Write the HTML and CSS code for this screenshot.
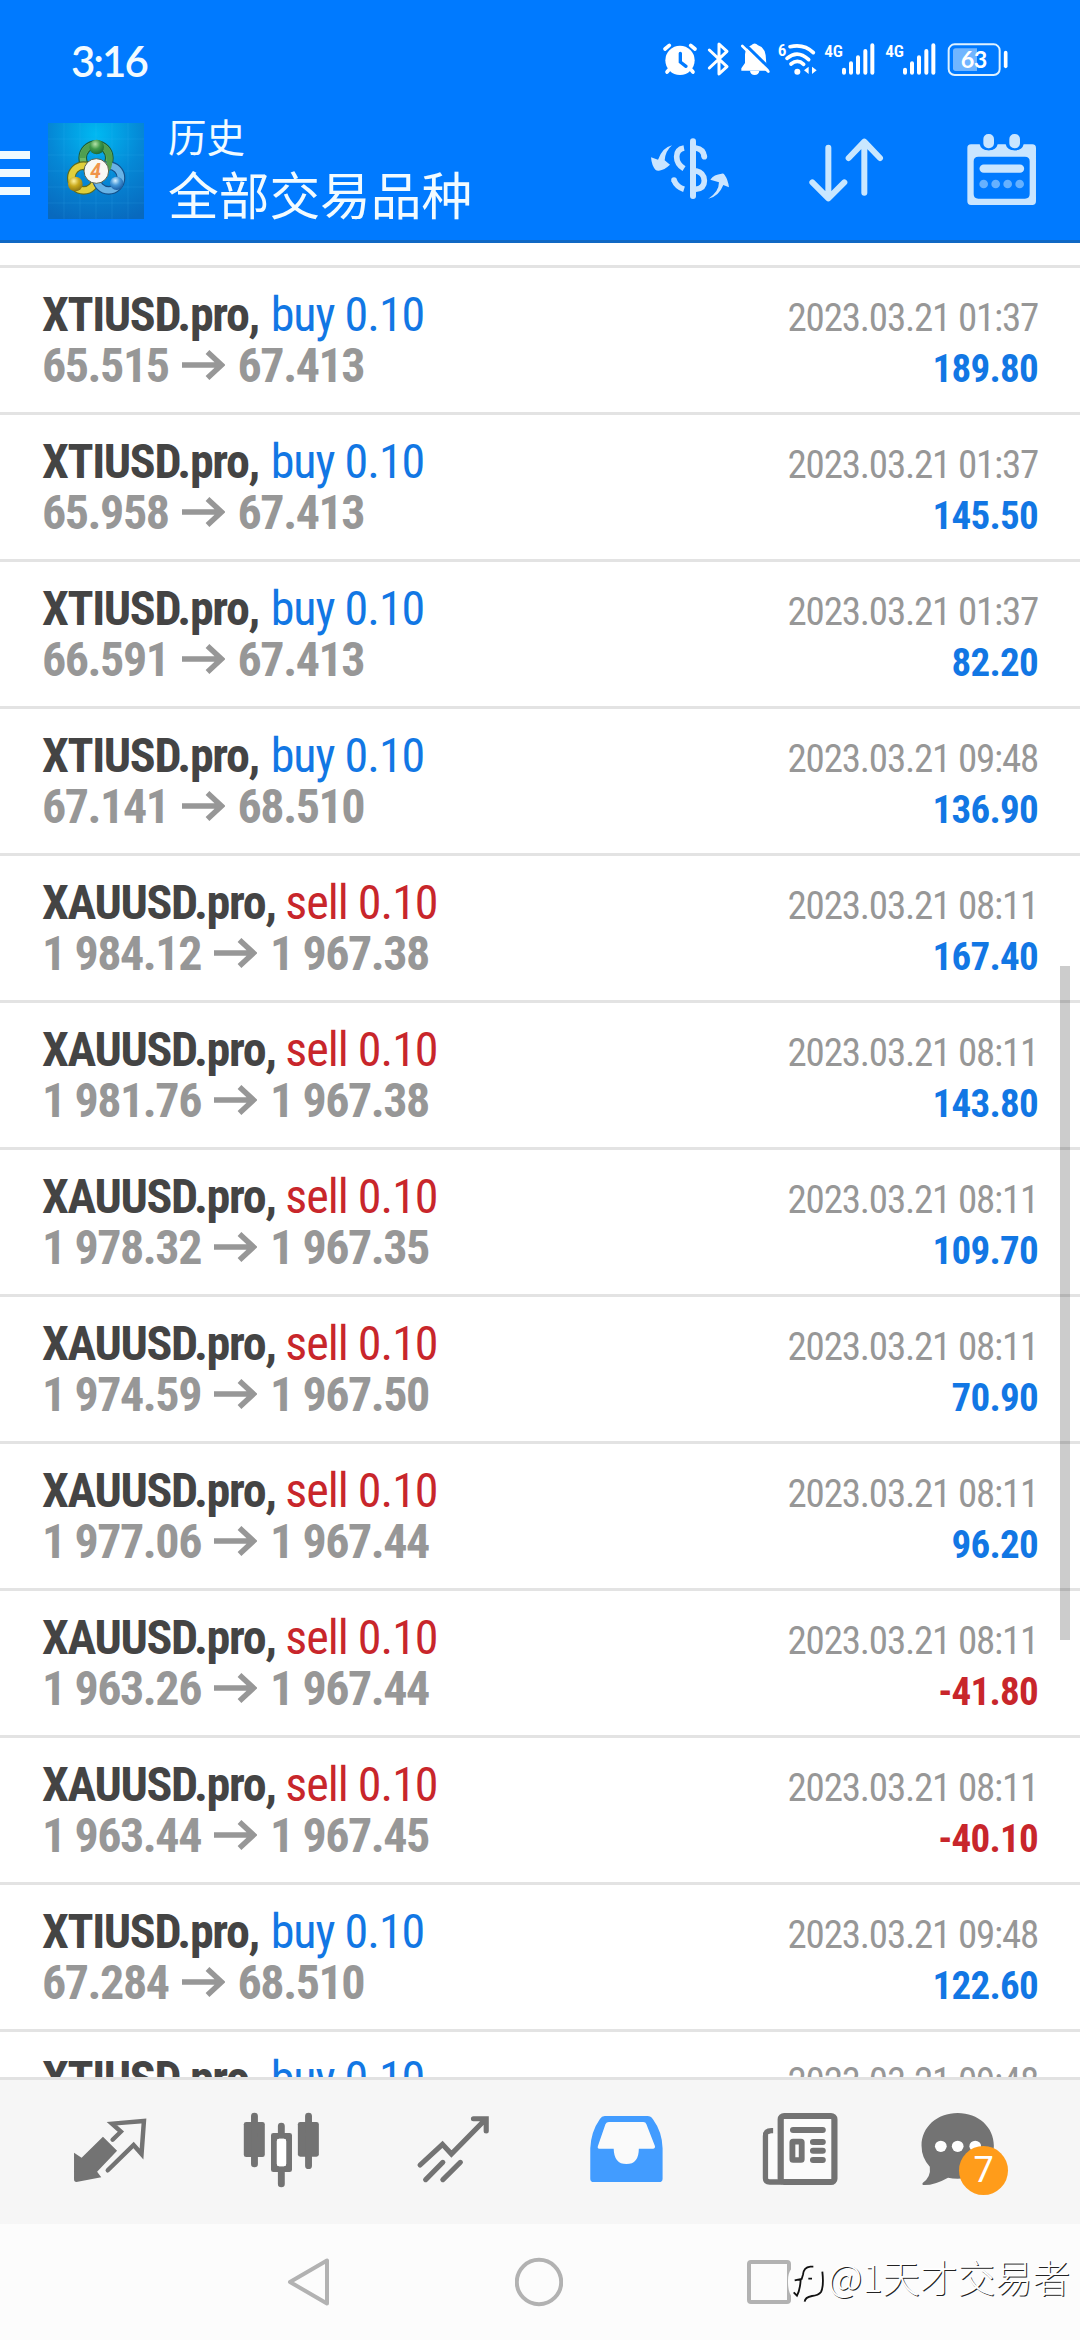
FILE: index.html
```
<!DOCTYPE html>
<html lang="zh-CN">
<head>
<meta charset="utf-8">
<title>历史</title>
<link rel="stylesheet" href="styles.css">
</head>
<body>
<div class="screen">
  <header class="header">
    <div class="status">
      <span class="clock">3:16</span>
      <div class="status-icons">
        <svg width="40" height="40" viewBox="180 120 120 120"><circle cx="240" cy="181" r="44" fill="#fff"/><path d="M195 147l13-11M285 147l-13-11M206 210l-5 6M274 210l5 6" stroke="#fff" stroke-width="11" stroke-linecap="round"/><path d="M241 160v26l17 13" fill="none" stroke="#007aff" stroke-width="10" stroke-linecap="round"/></svg>
        <svg width="35" height="40" viewBox="300 120 105 120"><path d="M328 150l53 50-24 22v-90l24 22-53 50" fill="none" stroke="#fff" stroke-width="9" stroke-linejoin="round" stroke-linecap="round"/></svg>
        <svg width="40" height="40" viewBox="405 120 120 120"><path d="M424 212v-7l11-16v-26q2-22 19-27 10-11 20 0 20 6 23 30l2 26 9 20h-84zM450 213h28q-2 12-14 12t-14-12z" fill="#fff"/><path d="M433 131l78 76" stroke="#007aff" stroke-width="9"/><path d="M427 138l78 77" stroke="#fff" stroke-width="8" stroke-linecap="round"/></svg>
        <svg width="45" height="40" viewBox="525 120 135 120"><text x="533" y="169" class="signal-label">6</text><g fill="none" stroke="#fff" stroke-width="11" stroke-linecap="round"><path d="M570 140q42-10 70 18M561 175q32-27 65 4M573 192q20-16 38 1"/></g><circle cx="592" cy="215" r="9" fill="#fff"/><path d="M626 200v22l-14-11zM636 200v22l14-11z" fill="#fff"/></svg>
        <svg width="60" height="40" viewBox="660 120 180 120"><text x="673" y="171" class="signal-label">4G</text><path d="M732 209v9M753 190v28M774 172v46M796 153v65M817 136v82" stroke="#fff" stroke-width="12" stroke-linecap="round"/></svg>
        <svg width="61.7" height="40" viewBox="840 120 185 120"><text x="856" y="171" class="signal-label">4G</text><path d="M915 209v9M936 190v28M957 172v46M979 153v65M1000 136v82" stroke="#fff" stroke-width="12" stroke-linecap="round"/></svg>
        <svg width="70" height="40" viewBox="1025 120 210 120"><rect x="1045" y="133" width="153" height="92" rx="18" fill="none" stroke="#dff2ff" stroke-width="6"/><path d="M1066 145h64v68h-64q-8 0-8-8v-52q0-8 8-8z" fill="#70b5ff"/><path d="M1216 158v41" stroke="#fff" stroke-width="11" stroke-linecap="round"/><text x="1120" y="205" text-anchor="middle" class="battery-label">63</text></svg>
      </div>
    </div>
    <div class="toolbar">
      <div class="menu"><i></i><i></i><i></i></div>
      <svg class="logo" width="96" height="96" viewBox="24 38 288 288">
        <defs>
          <radialGradient id="bg" cx=".5" cy=".12" r=".95"><stop offset="0" stop-color="#00b9f2"/><stop offset=".5" stop-color="#0588d6"/><stop offset="1" stop-color="#0869be"/></radialGradient>
          <radialGradient id="g" cx=".4" cy=".3" r=".7"><stop offset="0" stop-color="#b5e2a8"/><stop offset=".5" stop-color="#3f9a4a"/><stop offset="1" stop-color="#1c6a37"/></radialGradient>
          <radialGradient id="y" cx=".4" cy=".3" r=".7"><stop offset="0" stop-color="#fff3a0"/><stop offset=".5" stop-color="#c9a91c"/><stop offset="1" stop-color="#8b7615"/></radialGradient>
          <radialGradient id="b" cx=".4" cy=".3" r=".7"><stop offset="0" stop-color="#d5efff"/><stop offset=".5" stop-color="#4597d8"/><stop offset="1" stop-color="#1c5ea5"/></radialGradient>
        </defs>
        <rect x="24" y="38" width="288" height="288" fill="url(#bg)"/>
        <path d="M72 38v288M120 38v288M168 38v288M216 38v288M264 38v288M24 86h288M24 134h288M24 182h288M24 230h288M24 278h288" stroke="#4fc2ff" stroke-opacity=".28" stroke-width="1.5"/>
        <g fill="none">
          <circle cx="168" cy="143" r="40" stroke="#1d5e38" stroke-width="26"/><circle cx="168" cy="143" r="40" stroke="#6bb868" stroke-width="19"/>
          <circle cx="131" cy="203" r="37" stroke="#5e6b1d" stroke-width="26"/><circle cx="131" cy="203" r="37" stroke="#e0cf3c" stroke-width="19"/>
          <circle cx="206" cy="203" r="37" stroke="#14508a" stroke-width="26"/><circle cx="206" cy="203" r="37" stroke="#68b3e6" stroke-width="19"/>
          <path d="M128 143a40 40 0 0 1 80 0q3 18-6 34" stroke="#4f9f50" stroke-width="17"/>
        </g>
        <circle cx="170" cy="110" r="22" fill="url(#g)"/><circle cx="106" cy="221" r="22" fill="url(#y)"/><circle cx="230" cy="219" r="20" fill="url(#b)"/>
        <circle cx="169" cy="182" r="37" fill="#f8f8f4" stroke="#58634d" stroke-width="3"/>
        <text x="167" y="203" text-anchor="middle" class="logo-digit">4</text>
      </svg>
      <div class="titles"><div class="subtitle">历史</div><div class="title">全部交易品种</div></div>
      <div class="actions">
        <svg width="80" height="73.3" viewBox="150 400 240 220"><g fill="none" stroke="#cbe5ff" stroke-width="17"><path d="M279 425v164" stroke-width="18" stroke-linecap="round"/><path d="M252 445q-22 4-22 26 0 22 22 36"/><path d="M287 445q24 3 26 27M287 513q26 6 26 30 0 23-26 26" stroke-linecap="butt"/><path d="M222 542q8 20 30 27"/></g><circle cx="313" cy="471" r="8.5" fill="#cbe5ff"/><circle cx="222" cy="541" r="8.5" fill="#cbe5ff"/><path d="M216 437q-28 6-42 43l-21-7q2 26 14 38 4 3 10 2 16-2 33-18l-16-13q2-28 22-45zM325 597q32-20 32-49l-26-8q11-16 34-18 6-1 9 4 10 14 13 37l-17-7q-14 35-45 41z" fill="#cbe5ff"/></svg>
        <svg width="80" height="73.3" viewBox="620 400 240 220"><path d="M684 444v150M636 548l48 48 48-48M792 579V427M745 475l47-49 47 49" fill="none" stroke="#c9e7ff" stroke-width="18" stroke-linecap="round" stroke-linejoin="round"/></svg>
        <svg width="80" height="73.3" viewBox="1090 400 240 220"><path fill-rule="evenodd" d="M1114 434h26q4 18 27 18t27-18h24q4 18 27 18t27-18h26q11 0 11 11v160q0 11-11 11h-184q-11 0-11-11V445q0-11 11-11zM1136 471q-14 0-14 14v98q0 14 14 14h140q14 0 14-14v-98q0-14-14-14z" fill="#c9e5ff"/><g fill="#c9e5ff" stroke="#007aff" stroke-width="6"><rect x="1148" y="400" width="38" height="49" rx="18"/><rect x="1226" y="400" width="38" height="49" rx="18"/></g><path d="M1152 507h109" stroke="#c9e5ff" stroke-width="25" stroke-linecap="round"/><g fill="#66b1ff"><circle cx="1152" cy="553" r="13"/><circle cx="1188" cy="553" r="13"/><circle cx="1224" cy="553" r="13"/><circle cx="1260" cy="553" r="13"/></g></svg>
      </div>
    </div>
  </header>
  <main class="list" id="list"></main>
  <nav class="tabs">
    <div class="tab"><svg viewBox="69.7 150 499.5 432" preserveAspectRatio="none"><path d="M299 320l41 42-58 63 12 17-72 14q-7 0-7-8v-80l22 15z" fill="#737373"/><path d="M327 329l24-24-26-24 93-8-7 99-23-27-75 76" fill="none" stroke="#737373" stroke-width="13" stroke-linecap="round" stroke-linejoin="miter"/></svg></div>
    <div class="tab"><svg viewBox="569.2 150 499.5 432" preserveAspectRatio="none"><g fill="#737373"><rect x="708" y="276" width="61" height="105" rx="7"/><rect x="865" y="276" width="61" height="104" rx="7"/><path fill-rule="evenodd" d="M794 309h47q7 0 7 7v103q0 7-7 7h-47q-7 0-7-7V316q0-7 7-7zM811 326q-7 0-7 7v69q0 7 7 7h13q7 0 7-7v-69q0-7-7-7z"/><rect x="804" y="326" width="27" height="83" rx="7" fill="#fff"/></g><path d="M739 258v144M896 258v149M817 288v22M817 426v36" stroke="#737373" stroke-width="20" stroke-linecap="round"/></svg></div>
    <div class="tab"><svg viewBox="1068.7 150 499.5 432" preserveAspectRatio="none"><path d="M1220 405l65-62 26 29 97-102M1375 266h37v37M1236 449l50-52M1286 449l51-52" fill="none" stroke="#737373" stroke-width="15" stroke-linecap="round" stroke-linejoin="miter"/></svg></div>
    <div class="tab"><svg viewBox="0 150 499.5 432" preserveAspectRatio="none"><path fill="#429cff" fill-rule="evenodd" d="M188 258h124q10 0 16 10 27 38 28 87v91q0 10-10 10H156q-10 0-10-10v-91q2-50 28-88 5-9 14-9z"/><path d="M200 276h100q7 0 9 7l25 66q1 7-5 7h-42q0 46-36 46t-37-46h-42q-6 0-4-7l22-66q3-7 10-7z" fill="#fafafa"/></svg></div>
    <div class="tab"><svg viewBox="499.5 150 499.5 432" preserveAspectRatio="none"><g fill="none" stroke="#737373"><path d="M677 302h-5q-17 0-17 16v127q0 11 12 11h35" stroke-width="16"/><path d="M663 312h27v134h-27z" fill="#fbfbfb" stroke="none"/><rect x="699" y="258" width="156" height="198" rx="10" fill="#fbfbfb" stroke-width="18"/><path d="M735 300h86M793 336h28M793 362h28M793 390h28" stroke-width="18" stroke-linecap="round"/><rect x="733" y="335" width="27" height="55" rx="2" stroke-width="17"/></g></svg></div>
    <div class="tab"><svg viewBox="999 150 499.5 432" preserveAspectRatio="none"><path transform="translate(0 0)" d="M1213 249c60 0 105 42 105 98 0 62-48 99-105 99q-16 0-28-3-38 22-68 22-10 0-5-7 24-18 20-48-24-27-24-63c0-56 45-98 105-98z" fill="#737373"/><g fill="#fff"><circle cx="1164" cy="349" r="17"/><circle cx="1213" cy="349" r="17"/><circle cx="1264" cy="349" r="17"/></g></svg><span class="badge">7</span></div>
  </nav>
  <footer class="sysbar">
    <svg width="48" height="60" viewBox="0 0 48 60"><path d="M5 30L42 8.500V51.500Z" fill="none" stroke="#b2b2b2" stroke-width="4" stroke-linejoin="round"/></svg>
    <svg width="48" height="60" viewBox="0 0 48 60"><circle cx="24" cy="30" r="22.200" fill="none" stroke="#b2b2b2" stroke-width="4"/></svg>
    <svg width="48" height="60" viewBox="0 0 48 60"><rect x="4" y="10" width="40" height="40" rx="2" fill="none" stroke="#b2b2b2" stroke-width="4"/></svg>
  </footer>
  <i class="scrollbar"></i>
  <div class="watermark">
    <svg width="42" height="46" viewBox="134 60 126 138"><path d="M143 125q0-48 46-53 60-6 65 54-3 52-30 57l-30 12q-51-5-51-66z" fill="#fcfcfc"/><path d="M219 83h-9q-20 2-22 24l-4 13-21 4M181 123q-2 30-11 47l-10-10M204 119h11M246 98q5 43-4 61-8 10-27 12-21 4-22 17" fill="none" stroke="#111" stroke-width="5.500"/></svg>
    <span>@1天才交易者</span>
  </div>
</div>
<script src="list.js"></script>
</body>
</html>
```
FILE: styles.css
```
* { box-sizing: border-box; }
body { margin: 0; background: #fff; }
svg { display: block; flex: none; }

.screen {
  position: relative;
  display: flex;
  flex-direction: column;
  width: 1080px;
  height: 2340px;
  overflow: hidden;
  font-family: "Roboto Condensed", Roboto, "Noto Sans CJK SC", sans-serif;
}

.header {
  height: 243px;
  background: #007aff;
  border-bottom: 3px solid #1068c4;
  color: #f2fbff;
}
.status {
  display: flex;
  justify-content: space-between;
  height: 98px;
  padding: 40px 68px 0 71px;
}
.clock {
  font: 600 42px/42px Lato, sans-serif;
  letter-spacing: -2px;
}
.status-icons { display: flex; }
.signal-label { font: 600 52px "Roboto Condensed", sans-serif; fill: #fff; letter-spacing: -1px; }
.battery-label { font: 700 70px Lato, sans-serif; fill: #fff; letter-spacing: -2px; }

.toolbar { display: flex; height: 142px; }
.menu {
  display: flex;
  flex-direction: column;
  gap: 10px;
  width: 48px;
  padding-top: 53px;
}
.menu i { width: 30px; height: 8px; background: #effaff; }
.logo { margin-top: 25px; }
.logo-digit { font: italic 700 58px Roboto, sans-serif; fill: #f0954a; }
.titles {
  padding: 10px 0 0 24px;
  font-family: "Noto Sans CJK SC", sans-serif;
}
.subtitle { font-size: 38.5px; line-height: 54px; }
.title { font-size: 50.7px; line-height: 63px; }
.actions {
  display: flex;
  gap: 76.7px;
  margin-left: auto;
  padding: 35.3px 36.7px 0 0;
}

.list {
  height: 1834px;
  padding-top: 22px;
  overflow: hidden;
  background: #fff;
}
.row {
  display: flex;
  justify-content: space-between;
  height: 147px;
  padding: 21px 42px 0 42px;
  border-top: 3px solid #e3e3e3;
  line-height: 51px;
  white-space: nowrap;
}
.deal { font-size: 48px; font-weight: 700; }
.symbol { color: #444; letter-spacing: -1.35px; }
.side { font-weight: 400; letter-spacing: -1px; }
.side.buy { margin-left: 2px; }
.buy { color: #1277e4; }
.sell { color: #c8262b; }
.prices {
  display: flex;
  gap: 13px;
  color: #979797;
  letter-spacing: -1.45px;
}
.arrow { margin-top: 10px; }
.result {
  padding-top: 4px;
  font-size: 39px;
  text-align: right;
}
.time { color: #979797; letter-spacing: -1.2px; }
.profit { font-weight: 700; letter-spacing: -0.75px; }

.tabs {
  display: grid;
  grid-template-columns: repeat(6, 172px);
  height: 147px;
  padding-left: 24px;
  border-top: 3px solid #e2e2e2;
  background: #f6f6f6;
}
.tab { position: relative; }
.tab svg { width: 172px; height: 144px; }
.badge {
  position: absolute;
  left: 75px;
  top: 65.500px;
  width: 49px;
  height: 49px;
  border-radius: 50%;
  background: #ff9c1a;
  color: #fff;
  font: 400 36px/49px Roboto, sans-serif;
  text-align: center;
}

.sysbar {
  display: flex;
  gap: 182px;
  height: 116px;
  padding: 28px 0 0 285px;
  background: #fcfcfc;
}

.scrollbar {
  position: absolute;
  left: 1060px;
  top: 966px;
  width: 10px;
  height: 674px;
  background: rgba(0, 0, 0, .2);
}
.watermark {
  position: absolute;
  left: 785px;
  top: 2259px;
  display: flex;
  gap: 1px;
  color: #fff;
  font: 300 37.6px/34px "Noto Sans CJK SC", sans-serif;
  text-shadow: 1px 1px 0 #222;
  white-space: nowrap;
}
```
FILE: list.js
```
const deals = [
  ["XTIUSD.pro", "buy", "65.515", "67.413", "01:37", "189.80"],
  ["XTIUSD.pro", "buy", "65.958", "67.413", "01:37", "145.50"],
  ["XTIUSD.pro", "buy", "66.591", "67.413", "01:37", "82.20"],
  ["XTIUSD.pro", "buy", "67.141", "68.510", "09:48", "136.90"],
  ["XAUUSD.pro", "sell", "1 984.12", "1 967.38", "08:11", "167.40"],
  ["XAUUSD.pro", "sell", "1 981.76", "1 967.38", "08:11", "143.80"],
  ["XAUUSD.pro", "sell", "1 978.32", "1 967.35", "08:11", "109.70"],
  ["XAUUSD.pro", "sell", "1 974.59", "1 967.50", "08:11", "70.90"],
  ["XAUUSD.pro", "sell", "1 977.06", "1 967.44", "08:11", "96.20"],
  ["XAUUSD.pro", "sell", "1 963.26", "1 967.44", "08:11", "-41.80"],
  ["XAUUSD.pro", "sell", "1 963.44", "1 967.45", "08:11", "-40.10"],
  ["XTIUSD.pro", "buy", "67.284", "68.510", "09:48", "122.60"],
  ["XTIUSD.pro", "buy", "", "", "09:48", ""]
];
const arrow = '<svg class="arrow" width="43" height="30" viewBox="0 0 43 30"><path d="M0 15H39M25.500 2L39.500 15L25.500 28" fill="none" stroke="#979797" stroke-width="5.500"/></svg>';
document.getElementById("list").innerHTML = deals.map(([symbol, side, open, close, time, profit]) => `
  <div class="row">
    <div class="deal">
      <div><span class="symbol">${symbol}, </span><span class="side ${side}">${side} 0.10</span></div>
      ${open && `<div class="prices"><span>${open}</span>${arrow}<span>${close}</span></div>`}
    </div>
    <div class="result">
      <div class="time">2023.03.21 ${time}</div>
      <div class="profit ${profit.startsWith("-") ? "sell" : "buy"}">${profit}</div>
    </div>
  </div>`).join("");
```
